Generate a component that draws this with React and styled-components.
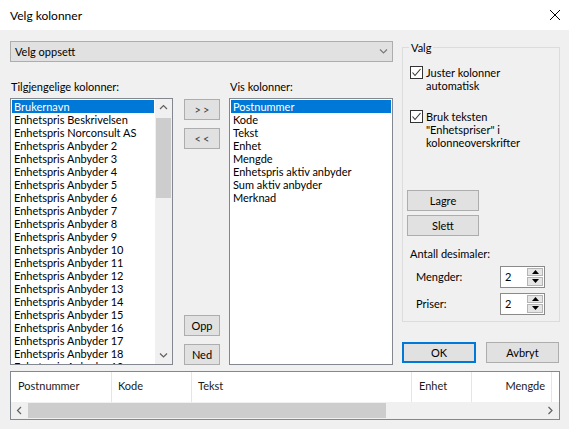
import React from "react";
import styled, { createGlobalStyle } from "styled-components";

const GlobalStyle = createGlobalStyle`
  * { box-sizing: border-box; }
  html, body { margin: 0; padding: 0; background: #f0f0f0; }
  body {
    font-family: Lato, "Liberation Sans", sans-serif;
    font-size: 11px;
    color: #000;
  }
`;

const Window = styled.div`
  width: 569px;
  height: 429px;
  display: flex;
  flex-direction: column;
  background: #f0f0f0;
  overflow: hidden;
`;

const TitleBar = styled.div`
  height: 30px;
  flex: none;
  background: #ffffff;
  display: flex;
  align-items: center;
  justify-content: space-between;
  padding: 0 8px 0 10px;
  font-size: 12px;
`;

const Body = styled.div`
  flex: 1;
  display: flex;
  flex-direction: column;
  padding: 11px 9px 0 10px;
`;

const Top = styled.div`
  display: flex;
  height: 324px;
`;

const LeftPane = styled.div`
  width: 383px;
  display: flex;
  flex-direction: column;
`;

const Combo = styled.div`
  height: 21px;
  background: #e1e1e1;
  border: 1px solid #adadad;
  display: flex;
  align-items: center;
  justify-content: space-between;
  padding: 0 4px 0 4px;
`;

const Columns = styled.div`
  margin-top: 18px;
  display: grid;
  grid-template-columns: 163px 1fr 164px;
  grid-template-rows: 18px 267px;
`;

const Label = styled.div`
  line-height: 13px;
  padding-left: 1px;
`;

const ListBox = styled.div`
  background: #ffffff;
  border: 1px solid #828790;
  display: flex;
  overflow: hidden;
`;

const Items = styled.div`
  flex: 1;
  padding: 1px 1px;
  overflow: hidden;
`;

const Item = styled.div`
  height: 13px;
  line-height: 13px;
  padding-left: 2px;
  white-space: nowrap;
  background: ${(p) => (p.selected ? "#0078d7" : "transparent")};
  color: ${(p) => (p.selected ? "#ffffff" : "#000000")};
`;

const VScroll = styled.div`
  width: 17px;
  background: #f0f0f0;
  display: flex;
  flex-direction: column;
`;

const ArrowBox = styled.div`
  width: 17px;
  height: 17px;
  flex: none;
  display: flex;
  align-items: center;
  justify-content: center;
`;

const VThumb = styled.div`
  margin: 2px 1px 0 1px;
  height: 80px;
  background: #cdcdcd;
`;

const Spacer = styled.div`
  flex: 1;
`;

const MoveButtons = styled.div`
  grid-row: 2;
  grid-column: 2;
  display: flex;
  flex-direction: column;
  padding: 1px 9px 0 11px;
  gap: 8px;
`;

const Button = styled.div`
  height: 21px;
  width: ${(p) => (p.w ? `${p.w}px` : "auto")};
  background: #e1e1e1;
  border: ${(p) => (p.primary ? "2px solid #0078d7" : "1px solid #adadad")};
  display: flex;
  align-items: center;
  justify-content: center;
  font-size: 11px;
  letter-spacing: ${(p) => (p.spaced ? "2px" : "normal")};
  padding-left: ${(p) => (p.spaced ? "2px" : "0")};
  color: ${(p) => (p.spaced ? "#444" : "#000")};
  flex: none;
`;

const RightPane = styled.div`
  margin-left: 9px;
  width: 158px;
  display: flex;
  flex-direction: column;
`;

const Group = styled.fieldset`
  margin: 0;
  height: 281px;
  border: 1px solid #dcdcdc;
  padding: 12px 0 0 0;
  display: flex;
  flex-direction: column;
  min-width: 0;
`;

const Legend = styled.legend`
  padding: 0 2px;
  margin-left: 6px;
  line-height: 13px;
`;

const CheckRow = styled.div`
  display: flex;
  align-items: flex-start;
  gap: 3px;
  margin-left: 7px;
  margin-top: ${(p) => p.mt || 0}px;
`;

const CheckText = styled.div`
  line-height: 13px;
`;

const Box = styled.div`
  width: 13px;
  height: 13px;
  flex: none;
  border: 1px solid #333333;
  background: #ffffff;
  display: flex;
  align-items: center;
  justify-content: center;
`;

const GroupButtons = styled.div`
  margin-top: 41px;
  margin-left: 4px;
  display: flex;
  flex-direction: column;
  gap: 4px;
`;

const Section = styled.div`
  margin-top: 11px;
  margin-left: 7px;
  line-height: 13px;
`;

const SpinRow = styled.div`
  display: flex;
  align-items: center;
  justify-content: space-between;
  margin: 6px 14px 0 13px;
  height: 21px;
`;

const Spinner = styled.div`
  width: 45px;
  height: 22px;
  background: #ffffff;
  border: 1px solid #8a8a8a;
  display: flex;
  align-items: center;
  justify-content: space-between;
  padding: 1px 1px 1px 4px;
`;

const SpinButtons = styled.div`
  width: 16px;
  height: 100%;
  display: flex;
  flex-direction: column;
  gap: 1px;
`;

const SpinButton = styled.div`
  flex: 1;
  background: #e5e5e5;
  border: 1px solid #b5b5b5;
  display: flex;
  align-items: center;
  justify-content: center;
`;

const DialogButtons = styled.div`
  margin-top: 20px;
  display: flex;
  justify-content: space-between;
  padding-right: 1px;
`;

const ListView = styled.div`
  margin-top: 6px;
  height: 49px;
  border: 1px solid #828790;
  background: #ffffff;
  display: flex;
  flex-direction: column;
`;

const Header = styled.div`
  height: 30px;
  display: flex;
`;

const HeaderCell = styled.div`
  width: ${(p) => p.w}px;
  flex: none;
  border-right: 1px solid #e5e5e5;
  display: flex;
  align-items: center;
  justify-content: ${(p) => (p.right ? "flex-end" : "flex-start")};
  padding: 0 6px 3px ${(p) => p.pl || 6}px;
  color: #1a1a1a;
`;

const HScroll = styled.div`
  height: 17px;
  background: #f0f0f0;
  display: flex;
  align-items: center;
`;

const HThumb = styled.div`
  width: 358px;
  height: 15px;
  background: #cdcdcd;
  margin-left: 0px;
`;

const Chevron = ({ dir, color = "#606060" }) => {
  const pts = {
    up: "1,5 4.5,1.5 8,5",
    down: "1,1.5 4.5,5 8,1.5",
    left: "5,1 1.5,4.5 5,8",
    right: "1.5,1 5,4.5 1.5,8",
  }[dir];
  const vertical = dir === "up" || dir === "down";
  return (
    <svg width={vertical ? 9 : 7} height={vertical ? 7 : 9}>
      <polyline points={pts} fill="none" stroke={color} strokeWidth="1.2" />
    </svg>
  );
};

const Triangle = ({ up }) => (
  <svg width="7" height="4">
    <polygon points={up ? "0,4 3.5,0 7,4" : "0,0 3.5,4 7,0"} fill="#000" />
  </svg>
);

const Check = () => (
  <svg width="11" height="11">
    <polyline points="1.5,5.5 4,8.5 9.5,2" fill="none" stroke="#333" strokeWidth="1.1" />
  </svg>
);

const available = [
  "Brukernavn",
  "Enhetspris Beskrivelsen",
  "Enhetspris Norconsult AS",
  ...Array.from({ length: 18 }, (_, i) => `Enhetspris Anbyder ${i + 2}`),
];

const shown = [
  "Postnummer",
  "Kode",
  "Tekst",
  "Enhet",
  "Mengde",
  "Enhetspris aktiv anbyder",
  "Sum aktiv anbyder",
  "Merknad",
];

const columns = [
  { name: "Postnummer", w: 101, pl: 7 },
  { name: "Kode", w: 80 },
  { name: "Tekst", w: 220 },
  { name: "Enhet", w: 60, pl: 7 },
  { name: "Mengde", w: 80, right: true },
];

const Spin = ({ value }) => (
  <Spinner>
    <span>{value}</span>
    <SpinButtons>
      <SpinButton>
        <Triangle up />
      </SpinButton>
      <SpinButton>
        <Triangle />
      </SpinButton>
    </SpinButtons>
  </Spinner>
);

export default function App() {
  return (
    <Window>
      <GlobalStyle />
      <TitleBar>
        <span>Velg kolonner</span>
        <svg width="12" height="12">
          <path d="M1 1 L11 11 M11 1 L1 11" stroke="#000" strokeWidth="1" />
        </svg>
      </TitleBar>
      <Body>
        <Top>
          <LeftPane>
            <Combo>
              <span>Velg oppsett</span>
              <Chevron dir="down" color="#7a7a7a" />
            </Combo>
            <Columns>
              <Label>Tilgjengelige kolonner:</Label>
              <span />
              <Label>Vis kolonner:</Label>
              <ListBox>
                <Items>
                  {available.map((name, i) => (
                    <Item key={name} selected={i === 0}>
                      {name}
                    </Item>
                  ))}
                </Items>
                <VScroll>
                  <ArrowBox>
                    <Chevron dir="up" />
                  </ArrowBox>
                  <VThumb />
                  <Spacer />
                  <ArrowBox>
                    <Chevron dir="down" />
                  </ArrowBox>
                </VScroll>
              </ListBox>
              <MoveButtons>
                <Button spaced>&gt;&gt;</Button>
                <Button spaced>&lt;&lt;</Button>
                <Spacer />
                <Button>Opp</Button>
                <Button>Ned</Button>
              </MoveButtons>
              <ListBox>
                <Items>
                  {shown.map((name, i) => (
                    <Item key={name} selected={i === 0}>
                      {name}
                    </Item>
                  ))}
                </Items>
              </ListBox>
            </Columns>
          </LeftPane>
          <RightPane>
            <Group>
              <Legend>Valg</Legend>
              <CheckRow>
                <Box>
                  <Check />
                </Box>
                <CheckText>
                  Juster kolonner
                  <br />
                  automatisk
                </CheckText>
              </CheckRow>
              <CheckRow mt={18}>
                <Box>
                  <Check />
                </Box>
                <CheckText>
                  Bruk teksten
                  <br />
                  "Enhetspriser" i
                  <br />
                  kolonneoverskrifter
                </CheckText>
              </CheckRow>
              <GroupButtons>
                <Button w={72}>Lagre</Button>
                <Button w={72}>Slett</Button>
              </GroupButtons>
              <Section>Antall desimaler:</Section>
              <SpinRow>
                <span>Mengder:</span>
                <Spin value="2" />
              </SpinRow>
              <SpinRow>
                <span>Priser:</span>
                <Spin value="2" />
              </SpinRow>
            </Group>
            <DialogButtons>
              <Button w={74} primary>OK</Button>
              <Button w={73}>Avbryt</Button>
            </DialogButtons>
          </RightPane>
        </Top>
        <ListView>
          <Header>
            {columns.map((c) => (
              <HeaderCell key={c.name} w={c.w} pl={c.pl} right={c.right}>
                {c.name}
              </HeaderCell>
            ))}
          </Header>
          <HScroll>
            <ArrowBox>
              <Chevron dir="left" />
            </ArrowBox>
            <HThumb />
            <Spacer />
            <ArrowBox>
              <Chevron dir="right" />
            </ArrowBox>
          </HScroll>
        </ListView>
      </Body>
    </Window>
  );
}
